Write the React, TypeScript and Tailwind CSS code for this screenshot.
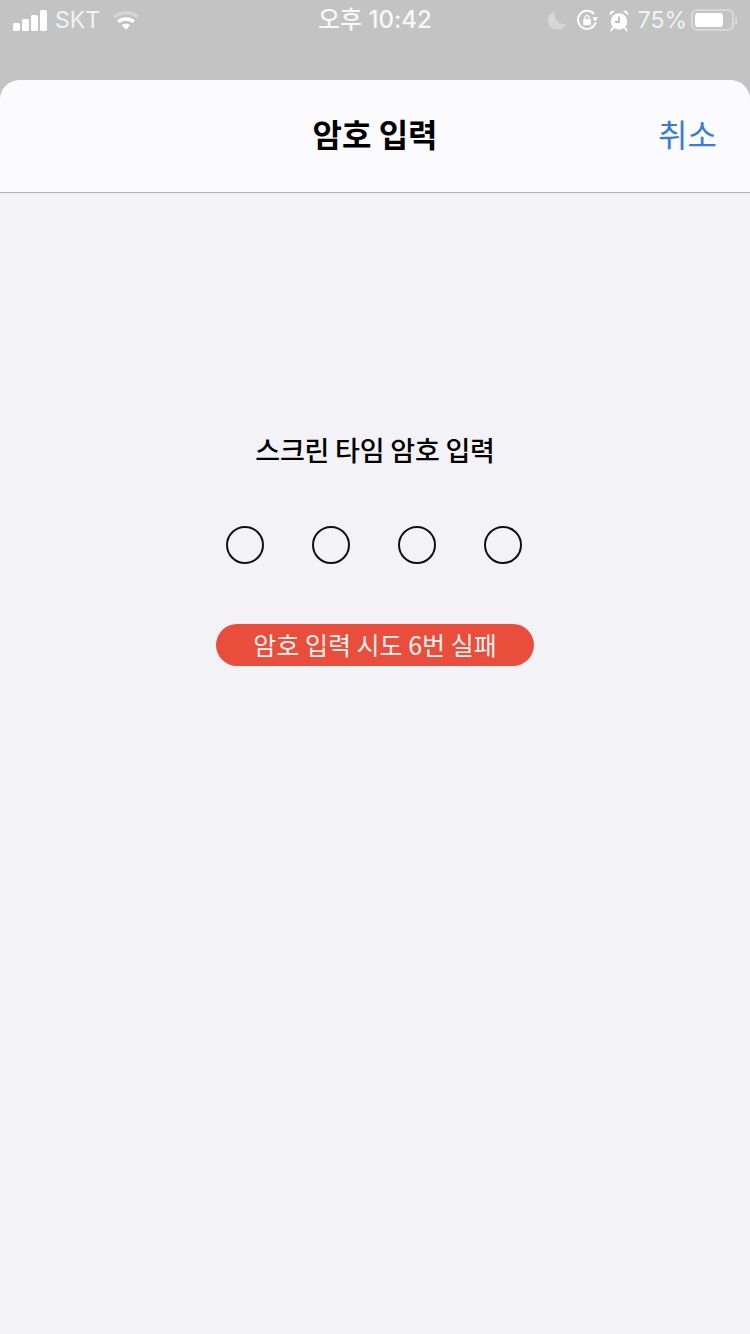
const FONT = "font-['Inter','Noto_Sans_CJK_KR',sans-serif]";
const CJK = "font-['Noto_Sans_CJK_KR','Noto_Sans',sans-serif]";

function Signal() {
  return (
    <div className="flex items-end gap-[2px] h-[21px]">
      <div className="w-[7px] h-[8px] rounded-[1.5px] bg-white" />
      <div className="w-[7px] h-[12px] rounded-[1.5px] bg-white" />
      <div className="w-[7px] h-[16px] rounded-[1.5px] bg-white" />
      <div className="w-[7px] h-[21px] rounded-[1.5px] bg-white" />
    </div>
  );
}

function Wifi() {
  return (
    <svg width="28" height="22" viewBox="0 0 30 22" fill="none">
      <path d="M1 6.5C9 -0.5 21 -0.5 29 6.5L26.5 9.5C19.5 3.8 10.5 3.8 3.5 9.5Z" fill="#fff" fillOpacity="0.3" />
      <path d="M5.5 11.5C11 7 19 7 24.5 11.5L22 14.2C17.5 11 12.5 11 8 14.2Z" fill="#fff" />
      <path d="M10.5 16.5C13 14.6 17 14.6 19.5 16.5L15 21.5Z" fill="#fff" />
    </svg>
  );
}

function Moon() {
  return (
    <svg width="20" height="21" viewBox="0 0 22 22">
      <path d="M8.5 1C4 2.2 1 6.2 1 11c0 5.7 4.5 10 10.2 10 4.2 0 7.8-2.4 9.6-6.2-6.5 1.5-13.6-4.5-12.3-13.8Z" fill="#fff" fillOpacity="0.32" />
    </svg>
  );
}

function RotationLock() {
  return (
    <svg width="23" height="23" viewBox="0 0 24 24" fill="none">
      <path d="M20.5 14.5A9.5 9.5 0 1 1 18.5 4.8" stroke="#fff" strokeWidth="2" strokeLinecap="round" />
      <path d="M17 8.5h6L20 13Z" fill="#fff" />
      <rect x="7.5" y="10.5" width="8" height="6.5" rx="1" fill="#fff" />
      <path d="M9.3 10.5V9a2.2 2.2 0 0 1 4.4 0v1.5" stroke="#fff" strokeWidth="1.3" />
    </svg>
  );
}

function Alarm() {
  return (
    <svg width="20" height="23" viewBox="0 0 22 24" fill="none">
      <circle cx="11" cy="13" r="9" fill="#fff" />
      <path d="M11 7.5V13.5H6.5" stroke="#b5b5b5" strokeWidth="1.8" />
      <path d="M1 6.5A4 4 0 0 1 6.5 1.5ZM21 6.5A4 4 0 0 0 15.5 1.5Z" fill="#fff" />
      <path d="M4.5 20 2.5 23M17.5 20l2 3" stroke="#fff" strokeWidth="2" strokeLinecap="round" />
    </svg>
  );
}

function Battery() {
  return (
    <div className="flex items-center gap-[1px]">
      <div className="w-[43px] h-[22px] rounded-[6px] border-2 border-[#d8d8d8] p-[2px] flex">
        <div className="w-[28px] rounded-[3px] bg-white" />
      </div>
      <div className="w-[2px] h-[7px] rounded-r-[1px] bg-[#d8d8d8]" />
    </div>
  );
}

function Dot() {
  return <div className="w-[38px] h-[38px] rounded-full border-2 border-[#111]" />;
}

export default function App() {
  return (
    <div className={`w-[750px] h-[1334px] flex flex-col overflow-hidden bg-[#c3c3c3] ${FONT}`}>
      <div className="h-[80px] shrink-0 pt-[6px] pl-[13px] pr-[13px] relative">
        <div className="flex h-[28px] items-center justify-between text-white">
          <div className="flex items-center">
            <Signal />
            <span className="ml-[8px] text-[23px] leading-none font-normal text-[#f2f2f2]">SKT</span>
            <div className="ml-[12px]"><Wifi /></div>
          </div>
          <div className="flex items-center">
            <div className="mr-[9px]"><Moon /></div>
            <div className="mr-[10px]"><RotationLock /></div>
            <div className="mr-[9px]"><Alarm /></div>
            <span className="mr-[4px] text-[23px] leading-none text-[#f2f2f2]">75%</span>
            <Battery />
          </div>
        </div>
        <div className="absolute left-[318px] top-[6px] h-[28px] flex items-center text-[24px] leading-none font-medium text-[#f8f8f8]">오후 10:42</div>
      </div>

      <div className="flex-1 flex flex-col rounded-t-[20px] overflow-hidden bg-[#f2f2f7]">
        <div className="h-[113px] shrink-0 bg-[#fbfbfd] border-b border-[#b1b1b3] relative flex items-center justify-center pb-[6px]">
          <span className={`text-[32px] leading-none font-semibold text-black ${CJK}`}>암호 입력</span>
          <span className={`absolute right-[33px] top-[37px] text-[32px] leading-none text-[#3a7dd0] ${CJK}`}>취소</span>
        </div>

        <div className="flex flex-col items-center pt-[238px]">
          <div className={`h-[36px] flex items-center text-[27px] tracking-[-0.2px] leading-none font-medium text-black ${CJK}`}>스크린 타임 암호 입력</div>
          <div className="mt-[59px] flex gap-[48px] pr-[2px]">
            <Dot /><Dot /><Dot /><Dot />
          </div>
          <div className={`mt-[60px] pb-[2px] w-[318px] h-[42px] rounded-full bg-[#e94d3b] flex items-center justify-center text-[25px] leading-none text-[#fdf1ef] ${CJK}`}>암호 입력 시도 6번 실패</div>
        </div>
      </div>
    </div>
  );
}
